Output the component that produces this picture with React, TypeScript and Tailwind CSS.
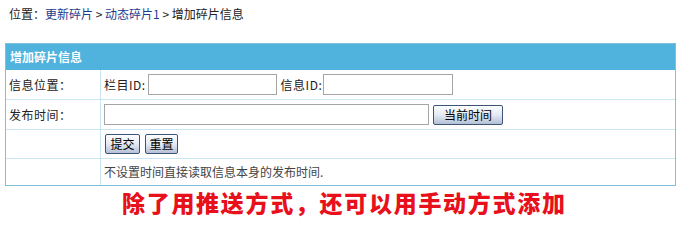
import React from 'react';

const font = { fontFamily: '"Noto Sans CJK SC", "Liberation Sans", sans-serif' };

function Btn({ children, className = '' }: { children: React.ReactNode; className?: string }) {
  return (
    <button
      className={`h-[20px] whitespace-nowrap rounded-[2px] border border-[#3e5475] bg-gradient-to-b from-[#fdfeff] via-[#e4eaf3] to-[#b3c0d6] px-0 text-[12px] leading-[18px] text-black ${className}`}
    >
      {children}
    </button>
  );
}

function Row({ label, children, h, last = false }: { label: string; children?: React.ReactNode; h: string; last?: boolean }) {
  return (
    <div className={`flex ${h} ${last ? '' : 'border-b border-[#c9e7f3]'}`}>
      <div className="flex w-[95px] shrink-0 items-center border-r border-[#c9e7f3] pl-[3px] text-[12px] tracking-[0.5px] text-[#222]">
        {label}
      </div>
      <div className="flex flex-1 items-center pl-[3px] text-[12px] text-[#222]">{children}</div>
    </div>
  );
}

export default function App() {
  return (
    <div className="h-[237px] w-[685px] bg-white" style={font}>
      <div className="pl-[9px] pt-[6px] text-[12px] leading-[16px] text-[#222]">
        位置：<span className="text-[#1c3b8f]">更新碎片</span> &gt; <span className="text-[#1c3b8f]">动态碎片1</span> &gt; 增加碎片信息
      </div>
      <div className="ml-[5px] mt-[21px] w-[671px] border border-[#7cc0dd]">
        <div className="flex h-[26px] items-center bg-[#50b3dd] pl-[4px] text-[12px] font-bold text-white">增加碎片信息</div>
        <Row label="信息位置：" h="h-[30px]">
          <span className="tracking-[0.5px]">栏目ID:</span>
          <input className="ml-[2px] h-[21px] w-[129px] border border-[#a5a5a5] bg-white" />
          <span className="ml-[4px] tracking-[0.5px]">信息ID:</span>
          <input className="ml-[1px] h-[21px] w-[130px] border border-[#a5a5a5] bg-white" />
        </Row>
        <Row label="发布时间：" h="h-[30px]">
          <input className="h-[21px] w-[325px] border border-[#a5a5a5] bg-white" />
          <Btn className="ml-[4px] w-[70px]">当前时间</Btn>
        </Row>
        <Row label="" h="h-[29px]">
          <Btn className="ml-[1px] w-[35px]">提交</Btn>
          <Btn className="ml-[5px] w-[33px]">重置</Btn>
        </Row>
        <Row label="" h="h-[26px]" last>
          <span className="text-[#444]">不设置时间直接读取信息本身的发布时间.</span>
        </Row>
      </div>
      <div className="mt-[1px] pl-[122px] text-[23px] font-black leading-[30px] tracking-[1.7px] text-[#e8101a]">
        除了用推送方式，还可以用手动方式添加
      </div>
    </div>
  );
}
